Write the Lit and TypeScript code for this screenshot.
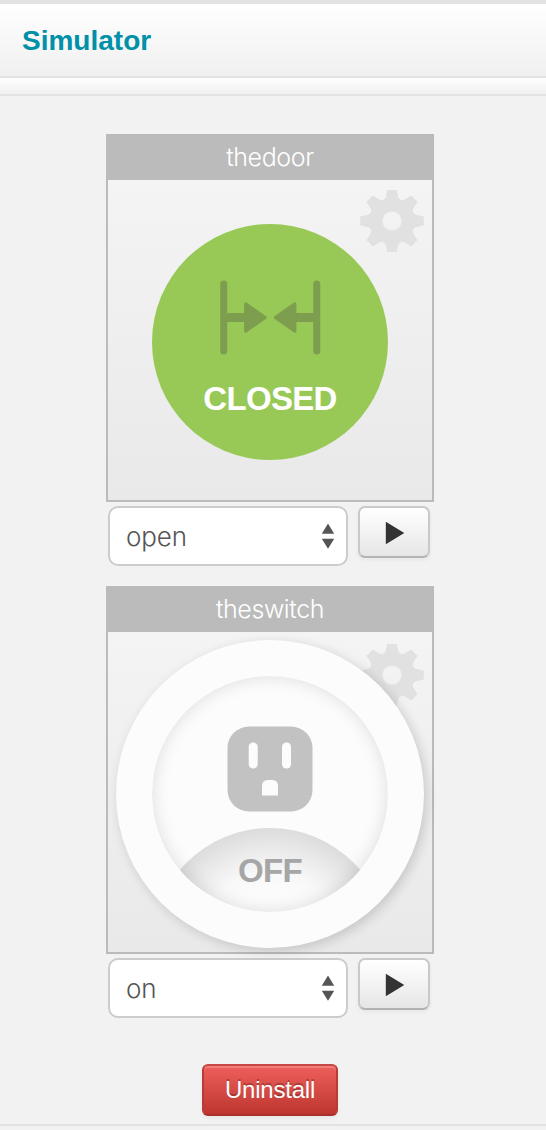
import { LitElement, html, svg, css, nothing } from "lit";
import { customElement, property } from "lit/decorators.js";

const polar = (deg: number, r: number): string => {
  const a = (deg * Math.PI) / 180;
  return `${(r * Math.cos(a)).toFixed(2)} ${(r * Math.sin(a)).toFixed(2)}`;
};

const gearPath = (): string => {
  let d = "";
  for (let i = 0; i < 8; i++) {
    const c = i * 45 - 90;
    d += `${i ? "L" : "M"}${polar(c - 7.5, 31.5)}L${polar(c + 7.5, 31.5)}`;
    d += `L${polar(c + 13.5, 24.6)}Q${polar(c + 16, 22.6)} ${polar(c + 22.5, 22.4)}`;
    d += `Q${polar(c + 29, 22.6)} ${polar(c + 31.5, 24.6)}`;
  }
  return d + "ZM10 0A10 10 0 1 0 -10 0A10 10 0 1 0 10 0Z";
};

@customElement("gear-icon")
class GearIcon extends LitElement {
  static styles = css`
    :host { display: block; }
    svg { display: block; }
  `;
  render() {
    return html`<svg width="64" height="62" viewBox="-32 -31 64 62">
      <path d=${gearPath()} fill="#e1e1e1" stroke="#e1e1e1" stroke-width="1" stroke-linejoin="round" fill-rule="evenodd"></path>
    </svg>`;
  }
}

@customElement("sim-device")
class SimDevice extends LitElement {
  @property() name = "";
  @property() kind = "door";
  @property() action = "";

  static styles = css`
    :host { display: block; width: 328px; }
    .tile { border: 2px solid #bbb; box-sizing: border-box; height: 368px; display: flex; flex-direction: column; }
    .name { background: #bbb; height: 44px; line-height: 43px; text-align: center; color: #fff;
      font-weight: 300; font-size: 25px; letter-spacing: -0.4px; }
    .body { position: relative; flex: 1; background: linear-gradient(#f4f4f4, #e9e9e9); display: grid;
      place-items: center; padding-top: 4px; box-sizing: border-box; }
    gear-icon { position: absolute; right: 8px; top: 10px; }
    .switch gear-icon { top: 12px; }
    .disc { position: relative; width: 236px; height: 236px; border-radius: 50%; background: #98c957; display: flex;
      flex-direction: column; align-items: center; }
    .label { font: 700 33px/38px "Liberation Sans", sans-serif; letter-spacing: -0.7px; color: #fff; }
    .disc svg { margin-top: 56px; }
    .disc .label { margin-top: 25px; }
    .ring { position: relative; width: 308px; height: 308px; border-radius: 50%; background: #fcfcfc; display: grid;
      place-items: center; box-shadow: 3px 3px 12px rgba(0, 0, 0, 0.16); }
    .well { position: relative; overflow: hidden; width: 236px; height: 236px; border-radius: 50%; display: flex;
      flex-direction: column; align-items: center; }
    .well svg { margin-top: 50px; }
    .off { position: absolute; left: 0; top: 152px; width: 236px; height: 236px; border-radius: 50%;
      background: radial-gradient(circle at 50% 50%, #fcfcfc 50px, #f8f8f8 74px, #ececec 94px, #dcdcdc 118px); }
    .shade { position: absolute; inset: 0; border-radius: 50%; box-shadow: inset 0 0 18px rgba(0, 0, 0, 0.13); }
    .well .label { position: relative; margin-top: 40px; color: #a6a6a6; }
    .controls { display: flex; align-items: flex-start; gap: 10px; padding: 4px 2px 0; }
    .select { box-sizing: border-box; width: 240px; height: 60px; border: 2px solid #ccc; border-radius: 10px;
      background: #fff; display: flex; align-items: center; justify-content: space-between; padding: 0 11px 0 16px;
      color: #555; font-weight: 300; font-size: 26px; letter-spacing: -0.1px; }
    .run { box-sizing: border-box; width: 72px; height: 52px; padding: 2px 0 0 1px; border: 2px solid #c9c9c9;
      border-bottom-color: #b3b3b3; border-radius: 7px; background: linear-gradient(#fff, #e6e6e6);
      box-shadow: 0 2px 4px rgba(0, 0, 0, 0.05); display: flex; align-items: center; justify-content: center; }
  `;

  door() {
    return html`<div class="disc">
      <svg width="102" height="75" viewBox="0 0 102 75" fill="#7d9d4f" stroke="#7d9d4f" stroke-linejoin="round">
        ${[0, 1].map((i) => svg`<g transform=${i ? "matrix(-1 0 0 1 102.5 0)" : "matrix(1 0 0 1 0 0)"}>
          <path d="M4.7 4V71" stroke-width="7" stroke-linecap="round"></path>
          <path d="M5 37.5H27" stroke-width="9"></path>
          <path d="M26.6 23.8L46.2 37.5L26.6 51.2Z" stroke-width="3"></path>
        </g>`)}
      </svg>
      <div class="label">CLOSED</div>
    </div>`;
  }

  outlet() {
    return html`<div class="ring"><div class="well">
      <div class="off"></div><div class="shade"></div>
      <svg width="86" height="86" viewBox="0 0 86 86">
        <rect x=".5" y=".5" width="85" height="85" rx="21.5" fill="#c2c2c2"></rect>
        <rect x="21.7" y="16.5" width="9" height="26" rx="4.2" fill="#fcfcfc"></rect>
        <rect x="55" y="16.5" width="9" height="26" rx="4.2" fill="#fcfcfc"></rect>
        <path d="M35 69.5V60Q35 54 41 54H45Q51 54 51 60V69.5Z" fill="#fcfcfc"></path>
      </svg>
      <div class="label">OFF</div>
    </div></div>`;
  }

  render() {
    return html`<div class="tile">
        <div class="name">${this.name}</div>
        <div class="body ${this.kind}">
          <gear-icon></gear-icon>
          ${this.kind === "door" ? this.door() : this.kind === "switch" ? this.outlet() : nothing}
        </div>
      </div>
      <div class="controls">
        <div class="select" role="combobox"><span>${this.action}</span>
          <svg width="14" height="26" viewBox="0 0 14 26" fill="#555"><path d="M7 .5L13.2 10.7H.8ZM.8 15.7H13.2L7 25.8Z"></path></svg>
        </div>
        <button class="run" aria-label="run">
          <svg width="20" height="24" viewBox="0 0 20 24"><path d="M.8 .8L19.3 12L.8 23.2Z" fill="#333"></path></svg>
        </button>
      </div>`;
  }
}

@customElement("app-root")
class AppRoot extends LitElement {
  static styles = css`
    :host { display: flex; flex-direction: column; box-sizing: border-box; height: 1130px; background: #f2f2f2;
      border-top: 4px solid #e3e3e3; font-family: Inter, "Liberation Sans", sans-serif; }
    .title { box-sizing: border-box; height: 74px; padding-left: 22px; margin: 0;
      border-bottom: 2px solid #e3e3e3; background: linear-gradient(#fff, #f0f0f0); color: #0090a8;
      font: 700 28px/73px "Liberation Sans", sans-serif; }
    .strip { box-sizing: border-box; height: 18px; border-bottom: 2px solid #e3e3e3; background: linear-gradient(#fff, #f0f0f0); }
    .main { display: flex; flex-direction: column; align-items: flex-start; gap: 20px; padding: 38px 106px 0; }
    .uninstall { box-sizing: border-box; width: 136px; height: 52px; margin: 26px 0 0 96px; padding: 0;
      border: 2px solid #bd3d39; border-color: #c64743 #bb3a36 #aa2e2a; border-radius: 6px;
      background: linear-gradient(#ee5f5b, #bd362f); color: #fff; font: 400 24px/46px "Liberation Sans", sans-serif;
      letter-spacing: -0.2px; text-shadow: 0 -2px 0 rgba(0, 0, 0, 0.25);
      box-shadow: inset 0 2px 0 rgba(255, 255, 255, 0.2), 0 2px 4px rgba(0, 0, 0, 0.05); }
    .foot { height: 4px; margin-top: 8px; border-top: 2px solid #e3e3e3; }
  `;

  render() {
    return html`<h1 class="title">Simulator</h1>
      <div class="strip"></div>
      <div class="main">
        <sim-device name="thedoor" kind="door" action="open"></sim-device>
        <sim-device name="theswitch" kind="switch" action="on"></sim-device>
        <button class="uninstall">Uninstall</button>
      </div>
      <div class="foot"></div>`;
  }
}
